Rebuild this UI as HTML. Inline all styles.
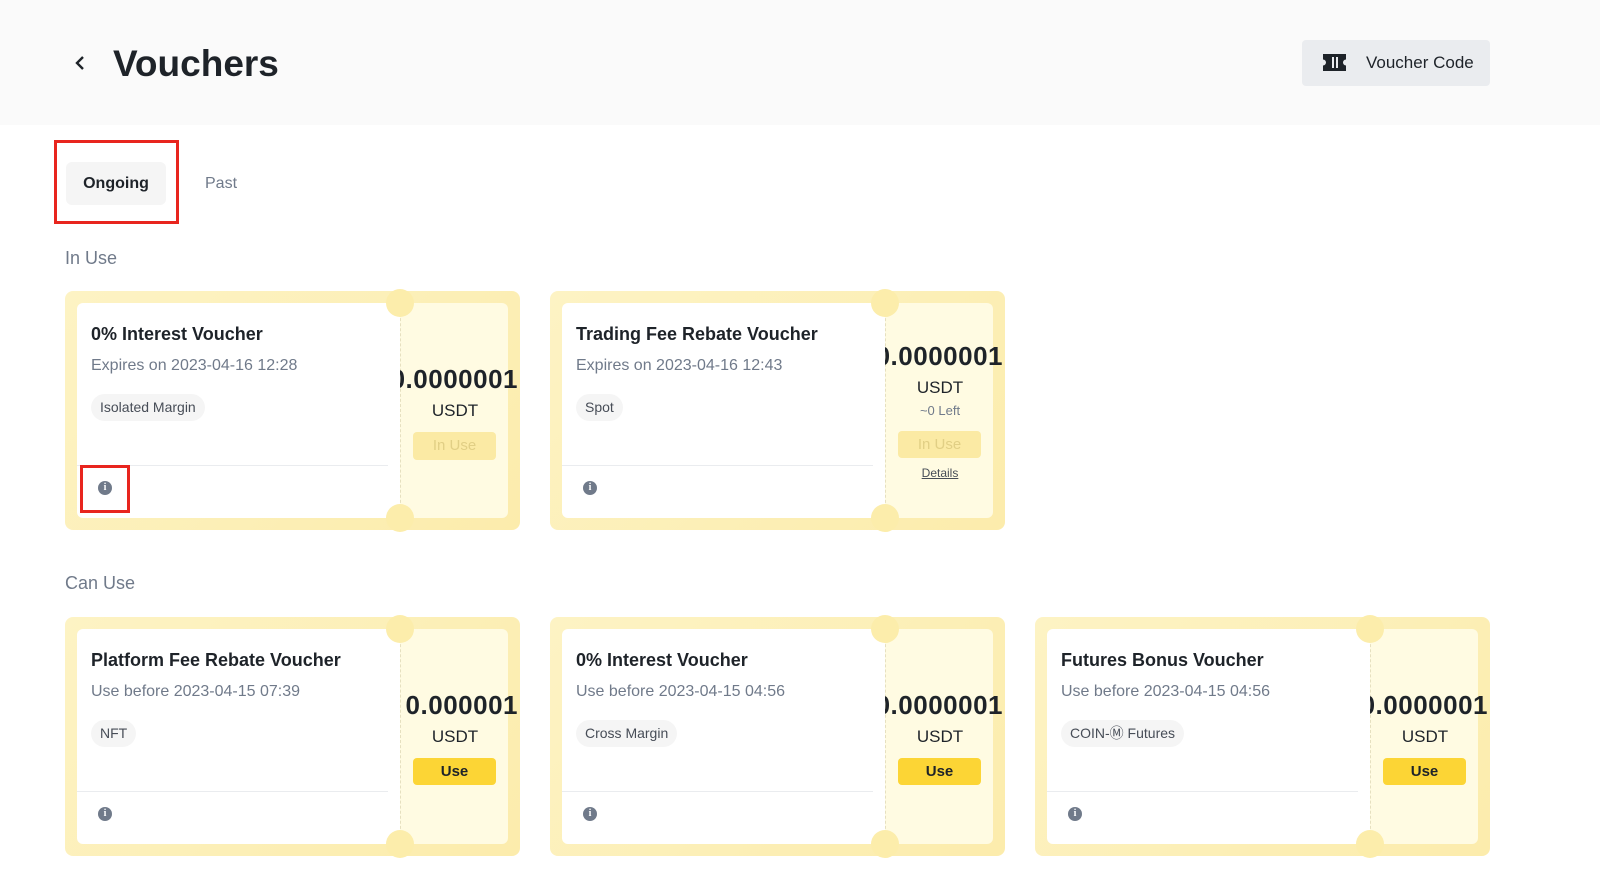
<!DOCTYPE html>
<html><head><meta charset="utf-8"><style>
*{margin:0;padding:0;box-sizing:border-box}
body{width:1600px;height:889px;background:#fff;font-family:"Liberation Sans",sans-serif;color:#1e2329;position:relative;overflow:hidden}
.hdr{position:absolute;left:0;top:0;width:1600px;height:125px;background:#fafafa}
.abs{position:absolute}
.card{position:absolute;width:455px;height:239px;border-radius:8px;background:linear-gradient(135deg,#fdf3c4,#fcecac)}
.white{position:absolute;left:12px;top:12px;width:323px;height:215px;background:#fff;border-radius:6px 0 0 6px;z-index:2}
.stub{position:absolute;left:335px;top:12px;width:108px;height:215px;background:#fffbe2;border-radius:0 6px 6px 0;border-left:1px dashed #e6e0c0}
.notch{position:absolute;left:321px;width:28px;height:28px;border-radius:50%;background:#fcedab;z-index:3}
.title{position:absolute;left:26px;top:33px;font-size:18px;font-weight:600;white-space:nowrap}
.exp{position:absolute;left:26px;top:66px;font-size:16px;color:#707a8a;white-space:nowrap}
.tag{position:absolute;left:26px;top:103px;height:27px;line-height:27px;padding:0 9px;border-radius:14px;background:#f5f5f5;font-size:14px;color:#474d57;white-space:nowrap}
.div{position:absolute;left:12px;top:174px;width:311px;height:1px;background:#eaecef}
.info{position:absolute;left:33px;top:190px;width:14px;height:14px;border-radius:50%;background:#707a8a;color:#fff;font-size:10px;font-weight:bold;text-align:center;line-height:14px;font-family:"Liberation Serif",serif}
.amtbox{position:absolute;left:335px;width:120px;height:34px;overflow:hidden}
.amtbox span{position:absolute;right:2px;top:0;white-space:nowrap;font-size:26px;font-weight:bold;letter-spacing:0.5px}
.usdt{position:absolute;left:335px;width:110px;text-align:center;font-size:17px;font-weight:500}
.btn{position:absolute;left:348px;width:83px;height:28px;border-radius:4px;text-align:center;line-height:28px;font-size:15px}
.inuse{background:#fbeaa4;color:#e1cf85}
.use{background:#fcd535;color:#1e2329;font-weight:600}
.sec{position:absolute;left:65px;font-size:18px;color:#707a8a}
</style></head><body>
<div class="hdr"></div>
<svg class="abs" style="left:73px;top:55px" width="14" height="16" viewBox="0 0 14 16"><path d="M10 2 L4 8 L10 14" stroke="#1e2329" stroke-width="2.4" fill="none"/></svg>
<div class="abs" style="left:113px;top:43px;font-size:37px;font-weight:bold">Vouchers</div>
<div class="abs" style="left:1302px;top:40px;width:188px;height:46px;background:#eaecef;border-radius:4px"></div>
<svg class="abs" style="left:1323px;top:54px" width="23" height="17" viewBox="0 0 23 17"><path d="M0 0H23V5.5A3 3 0 0 0 23 11.5V17H0V11.5A3 3 0 0 0 0 5.5Z" fill="#1e2329"/><rect x="9" y="3" width="2" height="11" fill="#eaecef"/><rect x="13" y="3" width="2" height="11" fill="#eaecef"/></svg>
<div class="abs" style="left:1366px;top:53px;font-size:17px;font-weight:500">Voucher Code</div>

<div class="abs" style="left:66px;top:162px;width:100px;height:43px;background:#f5f5f5;border-radius:6px;text-align:center;line-height:43px;font-size:16px;font-weight:600">Ongoing</div>
<div class="abs" style="left:54px;top:140px;width:125px;height:84px;border:3px solid #e8251e"></div>
<div class="abs" style="left:205px;top:175px;font-size:16px;color:#707a8a;font-weight:500">Past</div>

<div class="sec" style="top:248px">In Use</div>
<div class="sec" style="top:573px">Can Use</div>

<div class="card" style="left:65px;top:291px">
<div class="white"></div><div class="stub"></div>
<div class="notch" style="top:-2px"></div><div class="notch" style="top:213px"></div>
<div class="title" style="z-index:4">0% Interest Voucher</div>
<div class="exp" style="z-index:4">Expires on 2023-04-16 12:28</div>
<div class="tag" style="z-index:4">Isolated Margin</div>
<div class="div" style="z-index:4"></div>
<div class="info" style="z-index:4">i</div>
<div class="amtbox" style="top:73px"><span>0.0000001</span></div>
<div class="usdt" style="top:110px">USDT</div>
<div class="btn inuse" style="top:141px">In Use</div>
</div>
<div class="abs" style="left:80px;top:465px;width:50px;height:48px;border:3px solid #e8251e;z-index:5"></div>

<div class="card" style="left:550px;top:291px">
<div class="white"></div><div class="stub"></div>
<div class="notch" style="top:-2px"></div><div class="notch" style="top:213px"></div>
<div class="title" style="z-index:4">Trading Fee Rebate Voucher</div>
<div class="exp" style="z-index:4">Expires on 2023-04-16 12:43</div>
<div class="tag" style="z-index:4">Spot</div>
<div class="div" style="z-index:4"></div>
<div class="info" style="z-index:4">i</div>
<div class="amtbox" style="top:50px"><span>0.0000001</span></div>
<div class="usdt" style="top:87px">USDT</div>
<div class="usdt" style="top:112px;font-size:13px;color:#707a8a">~0 Left</div>
<div class="btn inuse" style="top:140px;height:27px;line-height:27px">In Use</div>
<div class="usdt" style="top:175px;font-size:12px;text-decoration:underline;color:#474d57">Details</div>
</div>

<div class="card" style="left:65px;top:617px">
<div class="white"></div><div class="stub"></div>
<div class="notch" style="top:-2px"></div><div class="notch" style="top:213px"></div>
<div class="title" style="z-index:4">Platform Fee Rebate Voucher</div>
<div class="exp" style="z-index:4">Use before 2023-04-15 07:39</div>
<div class="tag" style="z-index:4">NFT</div>
<div class="div" style="z-index:4"></div>
<div class="info" style="z-index:4">i</div>
<div class="amtbox" style="top:73px"><span>0.000001</span></div>
<div class="usdt" style="top:110px">USDT</div>
<div class="btn use" style="top:141px;height:27px;line-height:27px">Use</div>
</div>

<div class="card" style="left:550px;top:617px">
<div class="white"></div><div class="stub"></div>
<div class="notch" style="top:-2px"></div><div class="notch" style="top:213px"></div>
<div class="title" style="z-index:4">0% Interest Voucher</div>
<div class="exp" style="z-index:4">Use before 2023-04-15 04:56</div>
<div class="tag" style="z-index:4">Cross Margin</div>
<div class="div" style="z-index:4"></div>
<div class="info" style="z-index:4">i</div>
<div class="amtbox" style="top:73px"><span>0.0000001</span></div>
<div class="usdt" style="top:110px">USDT</div>
<div class="btn use" style="top:141px;height:27px;line-height:27px">Use</div>
</div>

<div class="card" style="left:1035px;top:617px">
<div class="white"></div><div class="stub"></div>
<div class="notch" style="top:-2px"></div><div class="notch" style="top:213px"></div>
<div class="title" style="z-index:4">Futures Bonus Voucher</div>
<div class="exp" style="z-index:4">Use before 2023-04-15 04:56</div>
<div class="tag" style="z-index:4">COIN-Ⓜ Futures</div>
<div class="div" style="z-index:4"></div>
<div class="info" style="z-index:4">i</div>
<div class="amtbox" style="top:73px"><span>0.0000001</span></div>
<div class="usdt" style="top:110px">USDT</div>
<div class="btn use" style="top:141px;height:27px;line-height:27px">Use</div>
</div>
</body></html>
